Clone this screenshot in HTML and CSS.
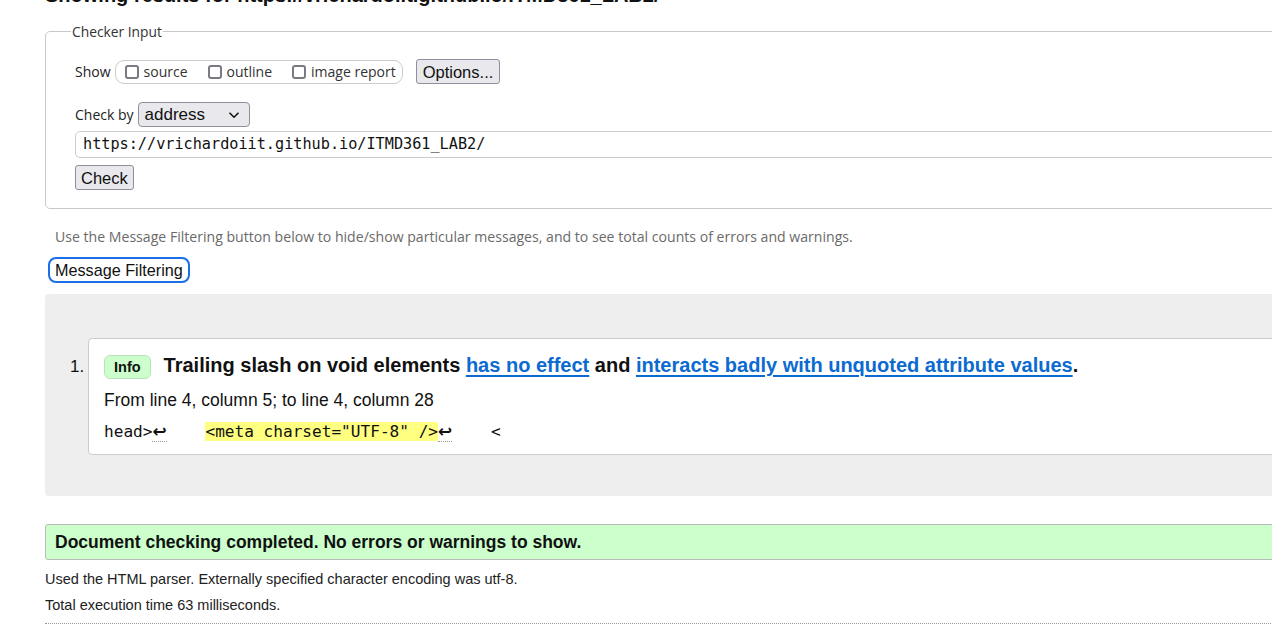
FILE: index.html
```html
<!DOCTYPE html>
<html lang="en">
<head>
<meta charset="utf-8">
<title>Nu Html Checker</title>
<link rel="stylesheet" href="styles.css">
</head>
<body>
<main class="page">
  <h2 class="results-title">Showing results for https://vrichardoiit.github.io/ITMD361_LAB2/</h2>

  <fieldset class="checker">
    <legend class="checker-legend">Checker Input</legend>
    <div class="row show-row">
      <span class="label">Show</span>
      <div class="check-group">
        <label class="opt"><span class="box"></span>source</label>
        <label class="opt"><span class="box"></span>outline</label>
        <label class="opt"><span class="box"></span>image report</label>
      </div>
      <button class="btn options-btn" type="button">Options...</button>
    </div>
    <div class="row by-row">
      <span class="label">Check by</span>
      <span class="select">address
        <svg class="chev" width="12" height="8" viewBox="0 0 12 8"><path d="M1.5 1.8 L6 6.2 L10.5 1.8" fill="none" stroke="#111" stroke-width="1.6"/></svg>
      </span>
    </div>
    <div class="url-input">https://vrichardoiit.github.io/ITMD361_LAB2/</div>
    <div class="row"><button class="btn check-btn" type="button">Check</button></div>
  </fieldset>

  <p class="hint">Use the Message Filtering button below to hide/show particular messages, and to see total counts of errors and warnings.</p>
  <button class="filter-btn" type="button">Message Filtering</button>

  <section class="results">
    <ol class="messages">
      <li class="message">
        <span class="num">1.</span>
        <div class="card">
          <p class="msg-title"><span class="badge">Info</span><span class="msg-text">Trailing slash on void elements <a href="#">has no effect</a> and <a href="#">interacts badly with unquoted attribute values</a>.</span></p>
          <p class="loc">From line 4, column 5; to line 4, column 28</p>
          <p class="extract"><code>head&gt;<span class="lf">↩</span>    <mark>&lt;meta charset="UTF-8" /&gt;</mark><span class="lf">↩</span>    &lt;</code></p>
        </div>
      </li>
    </ol>
  </section>

  <p class="success">Document checking completed. No errors or warnings to show.</p>
  <div class="details">
    <p>Used the HTML parser. Externally specified character encoding was utf-8.</p>
    <p>Total execution time 63 milliseconds.</p>
  </div>
  <hr class="dotted">
</main>
</body>
</html>
```

FILE: styles.css
```css
html, body {
  margin: 0;
  padding: 0;
  background: #fff;
  overflow: hidden;
}

body {
  font-family: "Liberation Sans", Arial, sans-serif;
  color: #111;
}

.page {
  width: 1400px;
  padding-left: 45px;
}

.results-title {
  margin: -17px 0 0 0;
  font-size: 20px;
  line-height: 24px;
  font-weight: bold;
  color: #111;
  white-space: nowrap;
}

.checker {
  margin: 15px 0 0 0;
  padding: 0 0 18px 29px;
  border: 1px solid #c8c8c8;
  border-radius: 5px;
  font-family: "Open Sans", "Noto Sans", sans-serif;
  font-size: 14px;
  color: #222;
}

.checker-legend {
  margin-left: -4px;
  padding: 0 1px;
  font-size: 13.8px;
  line-height: 19px;
  color: #333;
}

.row {
  display: flex;
  align-items: center;
}

.show-row {
  margin-top: 18px;
  height: 25px;
}

.label {
  color: #222;
}

.check-group {
  display: flex;
  align-items: center;
  gap: 20px;
  margin-left: 4px;
  height: 22px;
  padding: 0 6px 0 9px;
  border: 1px solid #ccc;
  border-radius: 9px;
}

.opt {
  display: flex;
  align-items: center;
  gap: 5px;
  font-size: 14px;
  color: #333;
}

.box {
  width: 14px;
  height: 14px;
  box-sizing: border-box;
  border: 2px solid #7a7a84;
  border-radius: 3px;
  background: #fff;
}

.btn {
  font-family: "Liberation Sans", Arial, sans-serif;
  font-size: 16.5px;
  color: #111;
  background: #e9e9ed;
  border: 1px solid #8f8f9d;
  border-radius: 3px;
  padding: 0 6px;
  height: 25px;
  line-height: 22px;
}

.options-btn {
  margin-left: 13px;
}

.by-row {
  margin-top: 18px;
  height: 25px;
}

.select {
  position: relative;
  margin-left: 4px;
  width: 112px;
  height: 25px;
  box-sizing: border-box;
  padding-left: 6px;
  font-family: "Liberation Sans", Arial, sans-serif;
  font-size: 17px;
  line-height: 23px;
  color: #111;
  background: #e9e9ed;
  border: 1px solid #8f8f9d;
  border-radius: 4px;
}

.chev {
  position: absolute;
  right: 9px;
  top: 8px;
}

.url-input {
  margin-top: 4px;
  height: 27px;
  box-sizing: border-box;
  padding-left: 7px;
  font-family: "DejaVu Sans Mono", "Liberation Mono", monospace;
  font-size: 15.2px;
  line-height: 25px;
  color: #111;
  border: 1px solid #ccc;
  border-radius: 5px;
}

.check-btn {
  margin-top: 7px;
  height: 25px;
  padding: 0 5px;
}

.hint {
  margin: 20px 0 0 10px;
  font-family: "Open Sans", "Noto Sans", sans-serif;
  font-size: 14.1px;
  line-height: 16px;
  color: #6a6a6a;
}

.filter-btn {
  display: block;
  margin: 12px 0 0 3px;
  height: 26px;
  padding: 0 5px;
  font-family: "Liberation Sans", Arial, sans-serif;
  font-size: 16.2px;
  color: #111;
  background: #fff;
  border: 2px solid #1a6ee6;
  border-radius: 8px;
}

.results {
  margin-top: 11px;
  height: 202px;
  box-sizing: border-box;
  padding-top: 44px;
  background: #eee;
  border-radius: 4px;
}

.messages {
  list-style: none;
  margin: 0;
  padding: 0;
}

.message {
  display: flex;
  align-items: flex-start;
}

.num {
  width: 43px;
  box-sizing: border-box;
  padding: 19px 4px 0 25px;
  font-size: 17px;
  color: #111;
}

.card {
  flex: 1;
  height: 117px;
  box-sizing: border-box;
  padding: 15px 0 0 15px;
  background: #fff;
  border: 1px solid #ccc;
  border-radius: 4px;
}

.card p {
  margin: 0;
}

.msg-title {
  display: flex;
  align-items: center;
  height: 26px;
}

.badge {
  display: inline-block;
  height: 24px;
  box-sizing: border-box;
  padding: 0 9px;
  font-size: 14.5px;
  font-weight: bold;
  line-height: 22px;
  color: #111;
  background: #ccffcc;
  border: 1px solid #b8e3b8;
  border-radius: 6px;
}

.msg-text {
  margin-left: 13px;
  margin-bottom: 4px;
  font-size: 20px;
  font-weight: bold;
  color: #111;
  white-space: nowrap;
}

.msg-text a {
  color: #0b6bd0;
  text-decoration: underline;
  text-decoration-thickness: 2px;
  text-underline-offset: 3px;
}

.card .loc {
  margin-top: 10px;
  font-size: 17.5px;
  line-height: 20px;
  color: #111;
}

.card .extract {
  margin-top: 11px;
  font-family: "DejaVu Sans Mono", "Liberation Mono", monospace;
  font-size: 16.1px;
  line-height: 20px;
  white-space: pre;
  color: #111;
}

.extract code {
  font-family: inherit;
}

.extract mark {
  background: #ffff80;
  color: #111;
}

.lf {
  font-family: "DejaVu Sans", sans-serif;
  font-size: 17px;
  font-weight: bold;
  border-bottom: 1px dotted #999;
}

.success {
  margin: 28px 0 0 0;
  height: 36px;
  box-sizing: border-box;
  padding-left: 9px;
  font-size: 17.5px;
  font-weight: bold;
  line-height: 34px;
  color: #111;
  background: #ccffcc;
  border: 1px solid #bbb;
  border-radius: 3px;
}

.details {
  margin-top: 6px;
}

.details p {
  margin: 0;
  font-size: 14.5px;
  line-height: 26px;
  color: #222;
}

.dotted {
  margin: 5px 0 0 0;
  border: 0;
  border-top: 1px dotted #999;
}
```
